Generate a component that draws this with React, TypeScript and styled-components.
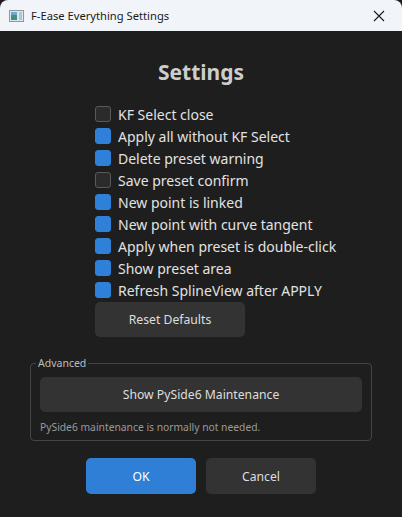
import React from "react";
import styled, { createGlobalStyle } from "styled-components";

const GlobalStyle = createGlobalStyle`
  html, body {
    margin: 0;
    padding: 0;
    background: #1d1d1d;
  }
  body {
    font-family: "Noto Sans", "Open Sans", sans-serif;
  }
`;

const Window = styled.div`
  width: 402px;
  height: 517px;
  display: flex;
  flex-direction: column;
  background: #1e1e1e;
  overflow: hidden;
  border-radius: 8px 8px 0 0;
`;

const TitleBar = styled.div`
  height: 31px;
  flex: none;
  display: flex;
  align-items: center;
  background: #f1f4f9;
  padding: 0 0 0 9px;
`;

const TitleText = styled.span`
  font-size: 11.2px;
  color: #1a1a1a;
  margin-left: 7px;
  flex: 1;
`;

const CloseButton = styled.div`
  width: 46px;
  height: 31px;
  display: flex;
  align-items: center;
  justify-content: center;
`;

const Body = styled.div`
  flex: 1;
  display: flex;
  flex-direction: column;
  align-items: center;
  padding: 27px 30px 0;
`;

const Heading = styled.h1`
  margin: 0;
  font-size: 21px;
  font-weight: 700;
  color: #cdcdcd;
  line-height: 28px;
`;

const OptionList = styled.div`
  align-self: stretch;
  display: flex;
  flex-direction: column;
  padding-left: 65px;
  margin-top: 17px;
`;

const OptionRow = styled.label`
  display: flex;
  align-items: center;
  height: 22px;
  gap: 7px;
  font-size: 14px;
  color: #e2e2e2;
`;

const Box = styled.span<{ checked: boolean }>`
  width: 16px;
  height: 16px;
  box-sizing: border-box;
  border-radius: 3px;
  background: ${p => (p.checked ? "#2f80d8" : "#2b2b2b")};
  border: 1px solid ${p => (p.checked ? "#2f80d8" : "#5a5a5a")};
`;

const Button = styled.button<{ primary?: boolean; w?: number; h?: number }>`
  font-family: inherit;
  font-size: 12.2px;
  color: ${p => (p.primary ? "#ffffff" : "#dedede")};
  background: ${p => (p.primary ? "#2e7fd5" : "#333333")};
  border: none;
  border-radius: 5px;
  width: ${p => (p.w ? `${p.w}px` : "100%")};
  height: ${p => p.h ?? 36}px;
  padding: 0;
`;

const ResetWrap = styled.div`
  margin-top: 1px;
`;

const Group = styled.fieldset`
  align-self: stretch;
  margin: 19px 0 0;
  padding: 7px 9px 6px;
  border: 1px solid #454545;
  border-radius: 4px;
  display: flex;
  flex-direction: column;
  gap: 8px;
`;

const Legend = styled.legend`
  font-size: 10.5px;
  color: #bdbdbd;
  padding: 0 2px;
  margin-left: -4px;
`;

const Note = styled.div`
  font-size: 10.3px;
  color: #9a9a9a;
`;

const Footer = styled.div`
  display: flex;
  gap: 10px;
  margin-top: 17px;
`;

const options: [string, boolean][] = [
  ["KF Select close", false],
  ["Apply all without KF Select", true],
  ["Delete preset warning", true],
  ["Save preset confirm", false],
  ["New point is linked", true],
  ["New point with curve tangent", true],
  ["Apply when preset is double-click", true],
  ["Show preset area", true],
  ["Refresh SplineView after APPLY", true],
];

function AppIcon() {
  return (
    <svg width="15" height="12" viewBox="0 0 15 12">
      <rect x="0.5" y="0.5" width="14" height="11" fill="#dfe6ee" stroke="#8e98a4" />
      <rect x="2" y="2" width="6" height="8" fill="#3f8f84" />
      <rect x="2" y="2" width="6" height="3" fill="#6fa9c9" />
      <rect x="10" y="2" width="3" height="8" fill="#b9c3cf" />
    </svg>
  );
}

export default function App() {
  return (
    <Window>
      <GlobalStyle />
      <TitleBar>
        <AppIcon />
        <TitleText>F-Ease Everything Settings</TitleText>
        <CloseButton>
          <svg width="12" height="12" viewBox="0 0 12 12">
            <path d="M1 1 L11 11 M11 1 L1 11" stroke="#1a1a1a" strokeWidth="1.1" />
          </svg>
        </CloseButton>
      </TitleBar>
      <Body>
        <Heading>Settings</Heading>
        <OptionList>
          {options.map(([label, checked]) => (
            <OptionRow key={label}>
              <Box checked={checked} />
              {label}
            </OptionRow>
          ))}
          <ResetWrap>
            <Button w={150} h={35}>Reset Defaults</Button>
          </ResetWrap>
        </OptionList>
        <Group>
          <Legend>Advanced</Legend>
          <Button h={35}>Show PySide6 Maintenance</Button>
          <Note>PySide6 maintenance is normally not needed.</Note>
        </Group>
        <Footer>
          <Button primary w={110} h={36}>OK</Button>
          <Button w={110} h={36}>Cancel</Button>
        </Footer>
      </Body>
    </Window>
  );
}
